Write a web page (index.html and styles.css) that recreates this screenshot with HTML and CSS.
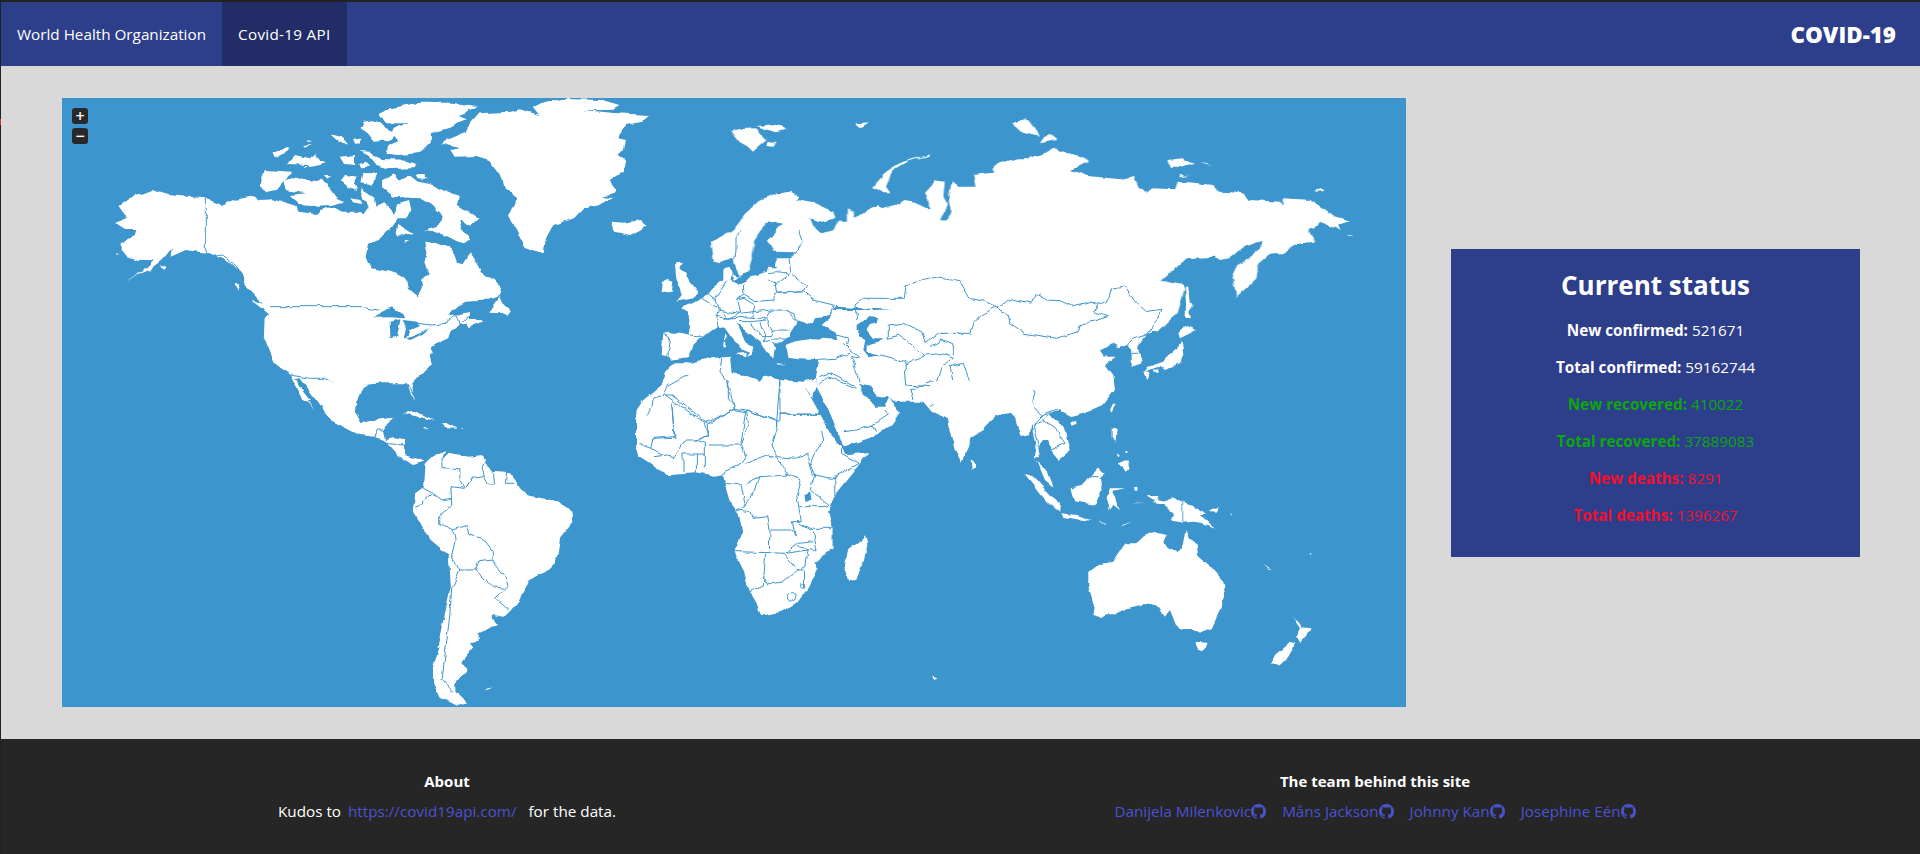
FILE: index.html
```html
<!DOCTYPE html>
<html lang="en">
<head>
<meta charset="utf-8">
<title>COVID-19</title>
<link rel="stylesheet" href="styles.css">
</head>
<body>
<span class="edge-mark"></span>
<header class="nav">
  <a class="nav-item">World Health Organization</a>
  <a class="nav-item active">Covid-19 API</a>
  <span class="brand">COVID-19</span>
</header>
<main class="main">
  <section class="map">
    <div class="zoom-controls">
      <span class="zoom-btn">+</span>
      <span class="zoom-btn">−</span>
    </div>
    <svg class="world" viewBox="62 98 1344 609" aria-label="World map">
      <defs>
        <filter id="coast" filterUnits="userSpaceOnUse" x="62" y="98" width="1344" height="609" color-interpolation-filters="sRGB">
          <feTurbulence type="fractalNoise" baseFrequency="0.09" numOctaves="2" seed="7" result="noise"/>
          <feDisplacementMap in="SourceGraphic" in2="noise" scale="5" xChannelSelector="R" yChannelSelector="G"/>
        </filter>
      </defs>
      <g filter="url(#coast)">
      <!-- North America, Arctic, Greenland -->
      <g transform="translate(60,90) scale(.4337,.3333)">
        <polygon class="land" points="135,348 160,325 210,300 250,315 335,325 372,345 400,330 440,320 465,330 490,328 545,350 550,365 590,372 600,360 630,350 650,365 680,365 700,372 712,350 695,325 695,295 725,320 730,350 745,340 760,350 770,375 780,340 805,330 810,360 800,385 775,385 775,395 750,430 735,445 710,465 705,500 720,535 760,545 800,565 805,600 825,622 835,590 832,570 850,550 840,520 845,490 840,455 870,460 890,470 905,480 915,515 930,520 945,490 965,530 970,550 1000,570 1017,595 1012,615 975,632 935,635 915,650 895,680 925,672 945,665 945,690 978,690 940,718 935,705 920,700 900,725 895,745 870,760 855,775 860,790 850,790 855,825 825,860 810,880 815,905 800,880 745,880 700,885 685,930 590,930 552,865 540,868 578,930 562,930 530,855 495,820 470,740 472,680 482,675 470,645 430,590 420,550 395,520 345,490 290,480 255,500 258,475 235,510 205,540 150,573 190,545 215,510 180,510 150,495 140,480 140,460 175,435 178,420 150,420 125,400 155,385"/>
        <polygon class="land" points="1090,50 1120,35 1160,27 1250,30 1290,45 1270,60 1205,60 1285,70 1360,75 1340,95 1305,105 1285,145 1305,150 1300,180 1285,190 1305,215 1300,245 1270,270 1285,310 1250,320 1275,325 1240,345 1205,358 1185,385 1140,405 1120,450 1115,490 1075,475 1050,415 1033,380 1045,345 1055,325 1025,295 1020,265 990,210 960,198 910,200 900,180 920,175 880,160 935,130 945,100 965,70 1040,65 1060,58 1105,75"/>
        <polygon class="sea" points="1025,312 1040,308 1055,322 1030,335"/>
        <polygon class="land" points="735,70 760,55 800,45 830,38 900,38 965,48 920,75 935,85 905,110 855,130 855,155 825,190 780,195 750,190 760,165 780,150 765,125 775,110 805,100 750,100"/>
        <polygon class="land" points="700,95 725,90 770,130 760,150 725,155 710,130 693,115"/>
        <polygon class="land" points="620,135 650,145 665,160 640,158"/>
        <polygon class="land" points="675,145 695,150 690,165 680,160"/>
        <polygon class="land" points="565,148 580,150 570,153"/>
        <polygon class="land" points="560,165 580,162 570,172"/>
        <polygon class="land" points="490,190 530,172 520,190 495,205"/>
        <polygon class="land" points="525,215 540,195 575,205 590,190 600,210 615,212 600,225 560,235 575,225 525,222"/>
        <polygon class="land" points="645,200 680,195 680,225 655,222"/>
        <polygon class="land" points="690,183 715,185 740,210 800,212 822,222 815,235 760,237 730,225 715,200"/>
        <polygon class="land" points="690,222 705,215 715,230 695,232"/>
        <polygon class="land" points="470,240 535,245 500,300 480,305 460,285"/>
        <polygon class="land" points="515,275 540,262 580,275 600,265 615,275 625,310 655,335 625,345 580,348 555,345 530,315 565,310 520,300"/>
        <polygon class="land" points="645,270 660,255 685,260 680,285 685,300 665,290"/>
        <polygon class="land" points="610,258 625,258 620,266"/>
        <polygon class="land" points="700,250 735,248 715,285 695,280"/>
        <polygon class="land" points="745,270 770,255 780,270 805,255 825,275 860,285 890,305 920,320 915,345 965,385 945,410 920,390 925,415 945,445 930,460 900,445 870,425 840,420 875,405 880,375 855,345 830,325 770,320 745,295"/>
        <polygon class="land" points="820,255 840,255 850,268 825,265"/>
        <polygon class="land" points="780,405 805,425 820,435 790,430 775,440"/>
        <polygon class="land" points="795,450 805,455 795,458"/>
        <polygon class="land" points="670,325 690,330 695,345 675,340"/>
        <polygon class="sea" points="846,362 858,356 862,368 850,375"/>
        <polygon class="land" points="1272,395 1300,398 1340,390 1350,410 1315,435 1280,425"/>
        <polygon class="land" points="1012,618 1020,640 1040,665 1035,680 1015,670 990,668 1000,640"/>
        <polygon class="land" points="440,630 470,640 485,675 460,650"/>
        <polygon class="land" points="400,585 410,585 412,605"/>
        <polygon class="land" points="130,490 138,493 130,495"/>
        <polygon class="land" points="230,530 245,528 238,540"/>
        <polygon class="sea" points="725,683 745,665 765,652 785,670 795,685 760,682"/>
        <polygon class="sea" points="760,695 785,688 777,740 762,745"/>
        <polygon class="sea" points="790,690 825,695 827,712 808,722 800,745 830,730 855,715 838,732 805,750 795,740 800,715"/>
        <polyline class="line" points="335,325 335,487 350,500 375,495 400,520 420,550 425,570 415,580"/>
        <polyline class="line" points="482,650 700,650 705,655 735,660"/>
        <polyline class="line" points="820,700 860,705 890,700 915,675 920,700 945,680"/>
        <polyline class="line" points="530,855 575,865 610,865 650,890 680,930"/>
      </g>
      <!-- Russia and Scandinavia -->
      <g transform="translate(700,90) scale(.4592,.3333)">
        <polygon class="land" points="210,330 250,340 290,365 295,385 265,395 240,385 250,420 265,430 290,420 300,395 320,395 320,355 335,365 335,380 390,348 395,358 430,345 445,330 470,335 505,358 490,310 510,268 533,272 530,320 540,345 525,390 535,392 550,365 545,345 542,300 553,275 562,290 600,290 595,255 640,248 640,225 690,205 715,205 750,190 775,172 785,185 835,200 845,215 810,240 845,258 915,268 945,258 955,290 975,310 985,295 1035,298 1040,272 1115,285 1130,305 1185,310 1195,330 1265,335 1270,348 1272,325 1330,330 1385,380 1415,392 1390,405 1395,420 1350,395 1345,410 1325,420 1338,455 1300,462 1270,490 1245,490 1215,525 1212,565 1185,600 1168,620 1160,560 1170,530 1215,480 1225,452 1190,465 1150,505 1130,510 1120,500 1060,505 1005,572 1050,585 1055,600 1040,670 1000,725 900,700 300,650 205,540 200,510 205,487 160,485 148,450 178,405 165,395 145,398 120,450 115,495 105,545 85,560 72,505 45,520 30,515 25,455 70,425 100,370 130,330 165,310 195,305 218,320"/>
        <polygon class="land" points="68,122 85,118 120,115 145,150 115,185 105,170 85,155"/>
        <polygon class="land" points="122,108 160,103 190,115 165,127 140,118"/>
        <polygon class="land" points="147,155 165,160 160,170 147,168"/>
        <polygon class="land" points="340,100 370,97 350,112"/>
        <polygon class="land" points="500,190 490,198 440,215 405,245 390,270 377,290 400,310 415,310 405,290 420,240 450,215 500,197"/>
        <polygon class="land" points="680,100 705,87 730,110 740,140 705,130"/>
        <polygon class="land" points="750,140 765,135 778,150 740,160"/>
        <polygon class="land" points="1020,210 1050,205 1075,218 1050,230 1025,230"/>
        <polygon class="land" points="1090,218 1115,228 1100,225"/>
        <polygon class="land" points="1045,255 1065,258 1045,262"/>
        <polygon class="land" points="1335,302 1355,296 1360,303 1340,305"/>
        <polygon class="land" points="1408,436 1422,442 1412,440"/>
      </g>
      <!-- Europe, Middle East, North Africa -->
      <g transform="translate(640,230) scale(.3333)">
        <polygon class="land" points="460,85 415,85 403,105 413,113 385,110 380,125 345,135 320,150 300,160 272,150 275,130 265,110 250,115 250,150 225,170 205,195 185,205 175,212 120,235 145,245 150,290 145,315 85,305 70,308 65,375 85,380 90,392 145,385 160,345 190,315 230,295 255,292 275,320 310,360 330,368 320,380 335,375 340,350 318,342 300,300 290,280 325,310 365,340 390,380 400,385 405,350 395,340 425,340 430,335 450,320 450,310 475,270 505,285 515,280 525,262 570,255 600,200 520,100"/>
        <polygon class="land" points="275,135 295,140 285,150"/>
        <polygon class="land" points="437,345 460,335 520,325 595,330 590,310 545,285 570,265 575,240 700,240 1200,240 1200,420 950,500 945,660 920,565 875,545 850,515 760,515 748,505 780,550 755,585 700,620 610,650 600,620 570,550 530,470 525,440 535,388 480,385 445,380"/>
        <polygon class="sea" points="650,285 690,258 715,262 710,280 690,285 680,300 700,325 730,325 715,335 680,345 680,365 720,378 690,385 670,360 675,335 650,300"/>
        <polygon class="sea" points="660,462 690,470 712,500 740,498 745,503 735,530 705,530 690,505 672,495"/>
        <polygon class="land" points="-12,560 -10,540 10,510 35,490 65,465 75,425 105,400 145,400 210,385 270,380 275,430 315,435 360,455 370,435 420,450 490,455 525,445 530,470 518,505 495,470 545,560 570,610 605,660 -12,660"/>
        <polygon class="land" points="105,100 125,98 118,115 135,130 150,155 175,185 160,205 110,215 125,195 118,170 108,140"/>
        <polygon class="land" points="65,160 85,150 100,155 95,185 62,190"/>
        <polygon class="land" points="290,372 320,368 318,382"/>
        <polygon class="land" points="255,312 261,313 258,330 254,330"/>
        <polygon class="land" points="250,335 259,335 258,355 250,355"/>
        <polygon class="land" points="410,400 440,402 412,404"/>
        <polyline class="line" points="305,0 285,20 285,60 280,95"/>
        <polyline class="line" points="385,0 385,30"/>
        <polyline class="line" points="475,0 490,35 460,70"/>
        <polyline class="line" points="385,128 410,125 450,130 410,160 385,150"/>
        <polyline class="line" points="450,85 455,125 450,130 500,170 490,185 410,190 405,155"/>
        <polyline class="line" points="310,160 312,195 345,215 400,210 410,185"/>
        <polyline class="line" points="260,155 225,205 235,240 300,250 290,210 312,195"/>
        <polyline class="line" points="205,195 225,210"/>
        <polyline class="line" points="185,205 225,230 240,235 230,265 235,295"/>
        <polyline class="line" points="145,315 190,318"/>
        <polyline class="line" points="70,310 90,320 80,380"/>
        <polyline class="line" points="230,255 265,265 255,250"/>
        <polyline class="line" points="265,265 300,250 340,245 335,265 300,262 250,265"/>
        <polyline class="line" points="290,210 312,205 345,225 340,245 395,240 380,265 335,265"/>
        <polyline class="line" points="410,190 490,185 520,210 580,225 570,255"/>
        <polyline class="line" points="395,240 440,240 470,270"/>
        <polyline class="line" points="440,240 465,255 475,275"/>
        <polyline class="line" points="380,265 400,300 450,300"/>
        <polyline class="line" points="300,275 335,275 375,270"/>
        <polyline class="line" points="335,280 365,320 395,320 400,300"/>
        <polyline class="line" points="370,335 395,330 440,330"/>
        <polyline class="line" points="360,275 375,310 370,335"/>
        <polyline class="line" points="145,435 80,470 70,495 40,505 35,530 20,560"/>
        <polyline class="line" points="245,385 240,425 265,460 265,505 285,535 205,582 95,495 75,495"/>
        <polyline class="line" points="95,520 105,625 40,628"/>
        <polyline class="line" points="420,450 420,575 320,540 285,535"/>
        <polyline class="line" points="420,552 540,552"/>
        <polyline class="line" points="205,582 205,620 165,630"/>
        <polyline class="line" points="320,540 325,580 300,660"/>
        <polyline class="line" points="410,575 410,600 395,650"/>
        <polyline class="line" points="960,155 885,142 795,165 790,205 670,205 645,225 650,270"/>
        <polyline class="line" points="960,155 990,205 1040,215 1070,230 1025,255 1000,280 990,310 900,310 855,340 845,305 790,280 745,285 745,325"/>
        <polyline class="line" points="745,325 775,315 810,340 855,375"/>
        <polyline class="line" points="720,375 795,395 795,405 800,465 870,470"/>
        <polyline class="line" points="795,405 860,375 905,370 940,385 905,405 890,450 810,480 820,510"/>
        <polyline class="line" points="870,350 905,330 940,345 940,375"/>
        <polyline class="line" points="610,340 625,355 660,385 635,380 650,430 660,465"/>
        <polyline class="line" points="535,388 590,385 630,370"/>
        <polyline class="line" points="535,440 570,430 640,465"/>
        <polyline class="line" points="535,465 565,440 650,475"/>
        <polyline class="line" points="610,605 650,600 700,585 710,605"/>
        <polyline class="line" points="700,585 745,555 735,540"/>
        <polyline class="line" points="870,530 890,515 940,460 930,410 970,400 990,455 1075,490 1120,480 1170,475 1200,540"/>
        <polyline class="line" points="995,460 1075,490 1075,510 1005,485 995,460"/>
        <polyline class="line" points="1080,515 1100,525 1120,545"/>
        <polyline class="line" points="1085,490 1115,490 1115,497 1085,497 1085,490"/>
        <polyline class="line" points="1070,230 1105,265 1110,285 1160,310 1200,315"/>
        <polyline class="line" points="1070,230 1115,210 1170,220 1200,190"/>
        <polyline class="line" points="590,315 625,325 620,345"/>
      </g>
      <!-- East Asia, Japan, Philippines -->
      <g transform="translate(1000,250) scale(.3333)">
        <polygon class="land" points="0,150 0,450 45,500 60,550 80,555 95,525 108,600 105,625 120,625 115,595 125,570 145,570 150,600 175,630 212,600 200,550 170,510 145,490 175,480 215,500 255,490 310,465 345,420 340,375 318,345 350,320 310,320 300,300 345,275 352,295 378,285 395,310 395,350 425,340 420,310 408,295 440,252 480,232 515,185 400,100"/>
        <polygon class="land" points="555,225 590,240 560,255 540,265 535,250"/>
        <polygon class="land" points="545,275 550,310 540,340 495,360 480,350 445,360 430,370 445,350 490,335 500,320 535,290"/>
        <polygon class="land" points="460,360 480,358 475,368 460,368"/>
        <polygon class="land" points="430,365 448,365 440,390"/>
        <polygon class="land" points="555,110 565,110 568,150 578,165 565,185 570,205 557,203 558,160"/>
        <polygon class="land" points="340,460 345,465 335,488 330,480"/>
        <polygon class="land" points="210,520 230,515 228,525 215,530"/>
        <polygon class="land" points="335,533 350,535 347,575 375,600 335,565"/>
        <polygon class="land" points="350,645 385,630 392,655 380,665 370,650"/>
        <polygon class="land" points="350,610 360,612 355,625"/>
        <polygon class="land" points="375,600 385,605 378,612"/>
        <polyline class="line" points="0,180 25,195 30,220 75,250 170,265 235,245 240,225 325,200 280,185 295,160 270,155 215,168 180,152 140,150 105,130 95,160 40,148 0,165"/>
        <polyline class="line" points="295,160 325,150 335,115 375,108 405,155 440,185 483,178 470,210 445,245 440,252 400,265 378,290"/>
        <polyline class="line" points="395,310 420,310"/>
        <polyline class="line" points="0,430 35,425 80,410 105,425 95,465 125,495 170,478"/>
        <polyline class="line" points="40,495 45,460 80,425"/>
        <polyline class="line" points="125,495 100,530 115,590"/>
        <polyline class="line" points="145,490 125,510 165,535 195,580 150,600 145,575"/>
        <polyline class="line" points="100,525 125,515"/>
      </g>
      <!-- India, South-East Asia, Oceania -->
      <g transform="translate(900,380) scale(.3333)">
        <polygon class="land" points="100,0 100,90 140,114 165,210 185,248 212,175 235,160 282,112 305,103 328,100 345,118 362,168 390,163 395,120 400,0"/>
        <polygon class="land" points="212,238 222,245 228,260 215,270"/>
        <polygon class="land" points="405,240 420,255 445,275 460,320 435,300 420,265"/>
        <polygon class="land" points="372,280 400,290 450,345 480,368 478,395 440,365 405,320"/>
        <polygon class="land" points="480,400 530,405 578,423 530,418 490,410"/>
        <polygon class="land" points="515,325 545,318 575,285 595,265 615,282 600,295 605,330 585,375 530,365 520,345"/>
        <polygon class="land" points="630,325 675,325 640,332 650,360 660,390 640,375 630,390 620,350"/>
        <polygon class="land" points="705,322 715,320 715,332 708,332"/>
        <polygon class="land" points="597,423 620,428 600,427"/>
        <polygon class="land" points="665,440 695,425 675,432"/>
        <polygon class="land" points="695,370 735,367 715,370"/>
        <polygon class="land" points="740,345 775,345 770,360 790,365 820,355 845,365 880,375 915,405 900,405 945,443 910,430 880,425 845,428 812,420 820,400 790,375 760,370 765,360"/>
        <polygon class="land" points="925,393 960,378 950,395"/>
        <polygon class="land" points="565,575 600,553 640,545 660,515 680,490 710,490 730,470 760,455 800,465 790,490 835,520 850,500 860,450 870,480 890,490 895,530 930,560 965,600 975,635 965,680 935,745 900,758 885,750 850,750 830,740 810,690 795,710 770,680 735,672 680,685 650,700 625,700 605,712 580,705 585,680 565,620"/>
        <polygon class="land" points="885,785 920,788 915,805 903,817 895,810"/>
        <polygon class="land" points="1178,712 1195,725 1205,745 1232,748 1222,770 1200,790 1188,768 1200,745"/>
        <polygon class="land" points="1113,850 1125,825 1170,785 1188,790 1165,830 1140,855"/>
        <polygon class="land" points="1090,550 1112,566 1108,568"/>
        <polygon class="land" points="1225,520 1235,520 1232,524"/>
        <polygon class="land" points="990,395 998,403 994,403"/>
        <polygon class="land" points="97,888 112,893 100,897"/>
        <polyline class="line" points="520,325 570,290 595,290"/>
        <polyline class="line thick" points="845,365 845,428"/>
      </g>
      <!-- Central and South America, southern Africa -->
      <g transform="translate(250,380) scale(.4464,.3333)">
        <polygon class="land" points="95,0 125,50 143,90 115,40 105,0"/>
        <polygon class="land" points="120,0 180,120 245,165 280,170 300,180 330,225 365,255 393,245 385,240 345,225 345,180 320,175 305,180 300,150 320,110 290,115 250,130 235,95 240,40 265,15"/>
        <polygon class="land" points="350,0 372,65 360,40"/>
        <polygon class="land" points="340,100 365,92 415,122 380,112 345,100"/>
        <polygon class="land" points="430,130 445,128 465,143 440,142"/>
        <polygon class="land" points="390,140 402,144 392,145"/>
        <polygon class="land" points="475,143 484,145 476,146"/>
        <polygon class="land" points="393,255 415,225 437,210 430,240 445,218 490,230 520,225 525,250 545,275 585,280 605,325 620,345 690,365 720,390 722,430 695,475 685,550 665,575 625,600 615,640 585,690 570,710 545,705 543,708 553,735 510,760 510,785 490,790 500,805 475,845 485,870 460,910 460,935 487,970 465,978 425,950 410,910 410,860 425,800 420,800 450,620 445,525 405,480 365,395 370,340 390,320"/>
        <polygon class="land" points="522,928 545,922 530,930"/>
        <polygon class="land" points="865,190 865,200 870,230 905,260 935,285 1000,280 1040,290 1060,285 1065,320 1075,365 1095,400 1103,460 1085,515 1105,570 1120,635 1135,670 1145,708 1190,695 1225,670 1268,590 1265,545 1305,505 1305,445 1295,395 1310,345 1385,220 1335,222 1325,200 1315,190"/>
        <polygon class="land" points="1378,465 1383,495 1375,540 1358,600 1340,603 1332,565 1340,510 1370,480"/>
        <polygon class="land" points="1530,888 1540,892 1530,896"/>
        <polygon class="sea" points="1240,342 1255,335 1258,360 1242,362"/>
        <polyline class="line" points="280,170 285,150 305,150"/>
        <polyline class="line" points="300,190 345,195"/>
        <polyline class="line" points="430,235 430,262 470,270 470,300 480,325 495,295 525,290 520,265 525,250"/>
        <polyline class="line" points="525,290 535,315 550,315 548,280"/>
        <polyline class="line" points="575,280 572,310 590,310"/>
        <polyline class="line" points="450,320 480,325"/>
        <polyline class="line" points="450,320 452,378 425,405 425,430 455,450 485,437 490,460 525,480 545,515 545,545 570,585 578,620 550,655 580,690"/>
        <polyline class="line" points="385,322 415,345 430,360 450,355"/>
        <polyline class="line" points="410,340 380,375 370,385"/>
        <polyline class="line" points="455,450 460,480 452,525 470,570"/>
        <polyline class="line" points="470,570 505,570 512,545 545,540"/>
        <polyline class="line" points="505,570 545,620 570,625"/>
        <polyline class="line" points="470,570 452,625 448,700 440,790 430,900 455,935"/>
        <polyline class="line" points="930,45 1020,130 1085,88 1070,0"/>
        <polyline class="line" points="1085,88 1110,95 1115,90 1180,125 1187,0"/>
        <polyline class="line" points="1187,103 1280,103"/>
        <polyline class="line" points="1180,125 1178,150 1168,195 1180,230 1225,235 1250,215 1250,240 1260,285"/>
        <polyline class="line" points="1110,95 1100,190 1110,230 1100,250 1065,270 1060,285"/>
        <polyline class="line" points="945,70 950,170 905,175 900,205"/>
        <polyline class="line" points="1020,130 1028,170 1000,180 975,180 955,220 950,230 935,225 905,230"/>
        <polyline class="line" points="870,190 900,205 925,225"/>
        <polyline class="line" points="1000,180 1020,190 1020,265"/>
        <polyline class="line" points="970,222 970,280"/>
        <polyline class="line" points="1000,222 1000,280"/>
        <polyline class="line" points="970,222 1020,222"/>
        <polyline class="line" points="1028,195 1100,195"/>
        <polyline class="line" points="1110,250 1160,225 1180,235 1205,285 1140,290 1110,310"/>
        <polyline class="line" points="1065,310 1100,315 1110,380"/>
        <polyline class="line" points="1280,150 1285,180 1265,220 1255,255 1265,285 1305,295 1365,250 1325,220 1325,205"/>
        <polyline class="line" points="1265,285 1255,330 1298,378"/>
        <polyline class="line" points="1310,345 1310,290"/>
        <polyline class="line" points="1140,290 1130,330 1110,380 1090,390 1120,395 1125,415 1160,410 1165,450 1215,450 1222,470 1215,425 1235,425 1225,350 1235,300 1205,285"/>
        <polyline class="line" points="1165,450 1163,518 1085,515"/>
        <polyline class="line" points="1163,518 1200,520 1228,490 1262,485"/>
        <polyline class="line" points="1230,380 1295,380"/>
        <polyline class="line" points="1225,425 1255,445 1305,445"/>
        <polyline class="line" points="1262,455 1270,510 1225,500"/>
        <polyline class="line" points="1155,522 1150,615 1120,635"/>
        <polyline class="line" points="1195,520 1225,570 1195,605 1160,615 1150,590"/>
        <polyline class="line" points="1200,520 1250,510 1245,560 1225,570 1240,570 1240,620"/>
        <ellipse class="ring" cx="1213" cy="652" rx="9" ry="11"/>
        <ellipse class="ring" cx="1238" cy="616" rx="5" ry="9"/>
      </g>
      </g>
    </svg>
  </section>
  <aside class="status">
    <h1 class="status-title">Current status</h1>
    <p class="stat"><b>New confirmed:</b> 521671</p>
    <p class="stat"><b>Total confirmed:</b> 59162744</p>
    <p class="stat good"><b>New recovered:</b> 410022</p>
    <p class="stat good"><b>Total recovered:</b> 37889083</p>
    <p class="stat bad"><b>New deaths:</b> 8291</p>
    <p class="stat bad"><b>Total deaths:</b> 1396267</p>
  </aside>
</main>
<footer class="footer">
  <div class="foot-col">
    <h2 class="foot-title">About</h2>
    <p class="foot-line">Kudos to <a class="foot-link link-api">https://covid19api.com/</a> for the data.</p>
  </div>
  <div class="foot-col">
    <h2 class="foot-title">The team behind this site</h2>
    <svg class="gh-defs" aria-hidden="true"><symbol id="github" viewBox="0 0 16 16"><path d="M8 0C3.58 0 0 3.58 0 8c0 3.54 2.29 6.53 5.47 7.59.4.07.55-.17.55-.38 0-.19-.01-.82-.01-1.49-2.01.37-2.53-.49-2.69-.94-.09-.23-.48-.94-.82-1.13-.28-.15-.68-.52-.01-.53.63-.01 1.08.58 1.23.82.72 1.21 1.87.87 2.33.66.07-.52.28-.87.51-1.07-1.78-.2-3.64-.89-3.64-3.95 0-.87.31-1.59.82-2.15-.08-.2-.36-1.02.08-2.12 0 0 .67-.21 2.2.82.64-.18 1.32-.27 2-.27.68 0 1.36.09 2 .27 1.53-1.04 2.2-.82 2.2-.82.44 1.1.16 1.92.08 2.12.51.56.82 1.27.82 2.15 0 3.07-1.87 3.75-3.65 3.95.29.25.54.73.54 1.48 0 1.07-.01 1.93-.01 2.2 0 .21.15.46.55.38A8.013 8.013 0 0016 8c0-4.42-3.58-8-8-8z"/></symbol></svg>
    <p class="foot-line team">
      <a class="foot-link member">Danijela Milenkovic<svg class="gh"><use href="#github"/></svg></a>
      <a class="foot-link member">Måns Jackson<svg class="gh"><use href="#github"/></svg></a>
      <a class="foot-link member">Johnny Kan<svg class="gh"><use href="#github"/></svg></a>
      <a class="foot-link member">Josephine Eén<svg class="gh"><use href="#github"/></svg></a>
    </p>
  </div>
</footer>
</body>
</html>
```

FILE: styles.css
```css
* { box-sizing: border-box; }
html, body { margin: 0; height: 100%; }
body {
  height: 854px;
  overflow: hidden;
  background: #d9d9d9;
  border-top: 2px solid #222;
  border-left: 1px solid #222;
  font-family: "Open Sans", "Noto Sans", sans-serif;
  font-size: 15.25px;
  color: #fff;
}
.edge-mark {
  position: absolute;
  left: 0;
  top: 119px;
  width: 1px;
  height: 6px;
  background: #d9342b;
}
.nav {
  display: flex;
  align-items: stretch;
  height: 64px;
  background: #2d3e8a;
}
.nav-item {
  display: flex;
  align-items: center;
  padding: 0 16px;
  color: #fff;
}
.nav-item.active { background: #222c66; letter-spacing: .3px; }
.brand {
  margin-left: auto;
  margin-right: 24px;
  align-self: center;
  font-size: 22.4px;
  font-weight: 800;
}
.main {
  display: flex;
  align-items: center;
  gap: 45px;
  height: 673px;
  padding: 32px 0 32px 61px;
}
.map {
  position: relative;
  flex: 0 0 1344px;
  height: 609px;
  background: #3d95ce;
}
.world { display: block; width: 1344px; height: 609px; }
.land { fill: #fff; }
.sea { fill: #3d95ce; }
.line, .ring {
  fill: none;
  stroke: #3d95ce;
  stroke-width: 1;
  stroke-linejoin: round;
  vector-effect: non-scaling-stroke;
}
.thick { stroke: #8fbfe0; stroke-width: 1.5; }
.zoom-controls {
  position: absolute;
  left: 10px;
  top: 10px;
  display: flex;
  flex-direction: column;
  gap: 4px;
}
.zoom-btn {
  display: flex;
  align-items: center;
  justify-content: center;
  width: 16px;
  height: 16px;
  border-radius: 3px;
  background: #292929;
  color: #fff;
  font-size: 16px;
  font-weight: 600;
  line-height: 1;
}
.status {
  flex: 0 0 409px;
  height: 308px;
  padding: 18px 0 0;
  background: #2d3e8a;
  text-align: center;
}
.status-title {
  margin: 0 0 17px;
  font-size: 26px;
  line-height: 36px;
  font-weight: 700;
}
.stat { margin: 0 0 16px; line-height: 21px; }
.good { color: #0da70d; }
.bad { color: #f0112f; }
.footer {
  display: grid;
  grid-template-columns: 892px 964px;
  height: 115px;
  padding-top: 31px;
  background: #262626;
  text-align: center;
}
.foot-title {
  margin: 0 0 8px;
  font-size: 15px;
  line-height: 22px;
  font-weight: 700;
}
.foot-line { margin: 0; line-height: 22px; }
.foot-link { color: #4b52d1; }
.link-api { margin: 0 8px 0 3px; }
.team {
  display: flex;
  justify-content: center;
  gap: 16px;
}
.member { display: inline-flex; align-items: center; }
.gh { width: 15px; height: 15px; fill: #4b52d1; }
.gh-defs { display: none; }
```
